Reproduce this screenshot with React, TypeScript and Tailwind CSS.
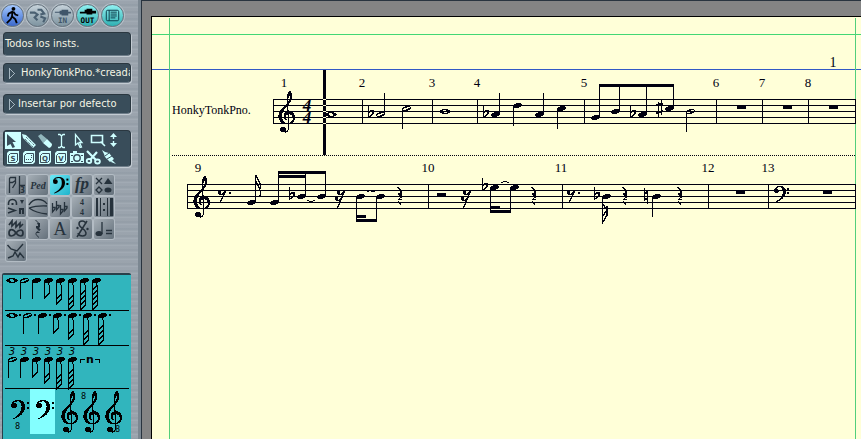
import React from 'react';
import clsx from 'clsx';

const INK = '#000010';

/* ---------- music glyphs ---------- */

type Head = 'whole' | 'half' | 'full';

const HEADS: Record<Head, string> = {
  whole: 'M-3 -2H3V-1H5V0H6V1H5V2H3V3H-3V2H-5V1H-6V0H-5V-1H-3ZM-2 -1V1H-1V2H2V0H1V-1Z',
  half: 'M-1 -2H4V-1H5V1H4V2H2V3H-3V2H-4V0H-3V-1H-1ZM-2 0V1H-3V2H0V1H2V0H4V-1H1V0Z',
  full: 'M-1 -2H4V-1H5V1H4V2H2V3H-3V2H-4V0H-3V-1H-1Z',
};

const NoteHead: React.FC<{ x: number; y: number; kind?: Head }> = ({ x, y, kind = 'full' }) => (
  <path d={HEADS[kind]} fillRule="evenodd" transform={`translate(${x} ${y})`} />
);

const TrebleClef: React.FC<{ x: number; y: number }> = ({ x, y }) => (
  <g transform={`translate(${x} ${y})`}>
    <path d="M9.200 14C7.900 8 8.800 2.400 12.200 0C14.900 3.500 14.600 9 12.400 12.400C9.600 16.400 4.400 19.400 3.800 25.400C3.400 29.800 6 33 9.400 33C12.800 33 14.800 31 14.800 28.200C14.800 25.800 13 24.200 10.900 24.200C8.800 24.200 7.600 25.800 7.800 27.600C7.900 29 8.600 29.800 9.600 30.400C7 30.200 5.400 28.200 5.600 25.800C5.800 22.800 8.200 21 11 21C14.600 21 17 23.800 17 27.400C17 31.600 13.800 34.400 9.200 34.400C3.800 34.400 0.200 31 0.200 26C0.200 20.400 5.200 17.200 8.800 13.400C11 11 12.800 8 12.600 4.600C10.600 5.600 9.800 9 10.600 13Z" />
    <path d="M9.600 10L10.600 37C10.700 40.500 9 42.300 6.600 42.200" fill="none" stroke="currentColor" strokeWidth="1.100" />
    <circle cx="5.200" cy="39.600" r="2.900" />
  </g>
);

const BassClef: React.FC<{ x: number; y: number; big?: boolean }> = ({ x, y, big }) => (
  <g transform={`translate(${x} ${y}) scale(${big ? 1.18 : 1})`}>
    <path d="M1 4.800C1.200 1.400 4 0 7 0C11 0 13 2.400 13 6C13 11 8 14.400 2.400 16.600L2 16C6.600 13.600 9.800 10.600 9.800 6C9.800 3 9 1.100 6.600 1.100C4.800 1.100 3 1.800 2.400 3.200Z" />
    <circle cx="3.400" cy="4.700" r="2.400" />
    <rect x="14.400" y="1.600" width="2" height="2" />
    <rect x="14.400" y="6" width="2" height="2" />
  </g>
);

const Flat: React.FC<{ x: number; y: number }> = ({ x, y }) => (
  <path d={`M${x - 1.5} ${y - 9}V${y + 3.5}L${x + 3} ${y - 0.5}V${y - 3}H${x + 0.5}L${x - 1.5} ${y - 1}`} fill="none" stroke="currentColor" strokeWidth="1.200" />
);

const Sharp: React.FC<{ x: number; y: number }> = ({ x, y }) => (
  <g stroke="currentColor">
    <path d={`M${x - 1.5} ${y - 6}V${y + 9}M${x + 1.5} ${y - 8}V${y + 7}`} strokeWidth="1" />
    <path d={`M${x - 3.5} ${y - 2.5}L${x + 3.5} ${y - 4.5}M${x - 3.5} ${y + 5}L${x + 3.5} ${y + 3}`} strokeWidth="2" />
  </g>
);

const Natural: React.FC<{ x: number; y: number }> = ({ x, y }) => (
  <g stroke="currentColor">
    <path d={`M${x - 1.5} ${y - 8}V${y + 5}M${x + 1.5} ${y - 5}V${y + 8}`} strokeWidth="1" />
    <path d={`M${x - 2} ${y - 2.5}L${x + 2} ${y - 4}M${x - 2} ${y + 4}L${x + 2} ${y + 2.5}`} strokeWidth="2" />
  </g>
);

const QuarterRest: React.FC<{ x: number; y: number }> = ({ x, y }) => (
  <g transform={`translate(${x} ${y})`}>
    <path d="M-1 -6H2V-2L1 -1L3 1H0L-2 -1V-3H0V-4Z" />
    <path d="M-2.500 -9L0.500 -6M2 1C0.500 2 -1.800 2.500 -2 4.500C-2 6.500 -0.500 7 1 8.500M-1.500 3.500H1.500" fill="none" stroke="currentColor" />
  </g>
);

const ShortRest: React.FC<{ x: number; y: number; hooks: number }> = ({ x, y, hooks }) => (
  <g>
    {Array.from({ length: hooks }, (_, i) => (
      <g key={i}>
        <circle cx={x - 2.5 - i * 2} cy={y - 4 + i * 6} r="1.900" />
        <path d={`M${x - 3 - i * 2} ${y - 2 + i * 6}H${x + 0.5 - i * 2}L${x + 4 - i * 2} ${y - 5.5 + i * 6}`} fill="none" stroke="currentColor" />
      </g>
    ))}
    <path d={`M${x + 4} ${y - 6}L${x - hooks * 2 + 0.5} ${y + (hooks === 2 ? 12 : 6)}`} stroke="currentColor" strokeWidth="1.300" />
  </g>
);

interface NoteProps {
  x: number;
  y: number;
  kind?: Head;
  stem?: number;
  up?: boolean;
  flat?: boolean;
}

const Note: React.FC<NoteProps> = ({ x, y, kind, stem, up, flat }) => {
  const sx = up ? x + 4 : x - 4;
  return (
    <g>
      {flat && <Flat x={x - 10} y={y} />}
      <NoteHead x={x} y={y} kind={kind} />
      {stem !== undefined && <rect x={sx} y={Math.min(y, stem)} width="1" height={Math.abs(stem - y)} />}
    </g>
  );
};

/* ---------- score ---------- */

interface StaffProps {
  x: number;
  y: number;
  bars: number[];
  numbers: [number, number][];
  children: React.ReactNode;
}

const Staff: React.FC<StaffProps> = ({ x, y, bars, numbers, children }) => (
  <g>
    {[0, 6, 12, 18, 24].map((dy) => (
      <rect key={dy} x={x} y={y + dy} width={856 - x} height="1" />
    ))}
    {[x, ...bars, 855].map((bx) => (
      <rect key={bx} x={bx} y={y} width="1" height="25" />
    ))}
    {numbers.map(([n, nx]) => (
      <text key={n} x={nx} y={y - 12} textAnchor="middle" className="text-[13px]">{n}</text>
    ))}
    {children}
  </g>
);

const FIRST_NOTES: NoteProps[] = [
  { x: 331, y: 114, kind: 'whole' },
  { x: 380, y: 114, kind: 'half', stem: 93, up: true, flat: true },
  { x: 406, y: 108, kind: 'half', stem: 129 },
  { x: 445, y: 111, kind: 'whole' },
  { x: 495, y: 114, stem: 93, up: true, flat: true },
  { x: 517, y: 105, stem: 126 },
  { x: 539, y: 114, stem: 93, up: true },
  { x: 561, y: 108, stem: 129 },
  { x: 595, y: 117, stem: 84, up: true },
  { x: 615, y: 111, stem: 84, up: true },
  { x: 642, y: 114, stem: 84, up: true, flat: true },
  { x: 669, y: 108, stem: 84, up: true },
  { x: 690, y: 111, kind: 'half', stem: 132 },
];

const SECOND_NOTES: NoteProps[] = [
  { x: 251, y: 202, stem: 175, up: true },
  { x: 274, y: 202, stem: 171, up: true },
  { x: 301, y: 196, stem: 171, up: true, flat: true },
  { x: 321, y: 196, stem: 171, up: true },
  { x: 360, y: 196, stem: 221 },
  { x: 380, y: 196, stem: 221 },
  { x: 494, y: 187, stem: 212, flat: true },
  { x: 514, y: 187, stem: 212 },
  { x: 606, y: 196, stem: 224, flat: true },
  { x: 656, y: 196, stem: 217 },
];

// [x, y, width, height]
const BEAMS = [
  [599, 84, 75, 3],
  [278, 171, 48, 3],
  [278, 175, 28, 3],
  [356, 219, 21, 3],
  [356, 215, 10, 3],
  [490, 210, 21, 3],
  [490, 206, 10, 3],
];

const BLOCK_RESTS = [[737, 106], [783, 106], [829, 106], [437, 193], [736, 191], [823, 191]];

const Score: React.FC = () => (
  <svg className="block w-full h-full text-[#000010] font-['Liberation_Serif',serif]" fill="currentColor" role="img" aria-label="HonkyTonkPno.">
    {/* the score keeps window coordinates, the sheet starts at 152,17 */}
    <g transform="translate(-152 -17)">
      <g shapeRendering="crispEdges">
        <rect x="152" y="34" width="100%" height="1" fill="#42d774" />
        <rect x="152" y="69" width="100%" height="1" fill="#3159c6" />
        <rect x="169" y="18" width="1" height="100%" fill="#52cf7b" />
        <rect x="855" y="18" width="1" height="100%" fill="#52cf7b" />
        <path d="M172 155.500H855" stroke={INK} strokeDasharray="1 1" />
      </g>
      <text x="833" y="67" textAnchor="middle" className="text-[14px]">1</text>
      <text x="172" y="114" className="text-[12px]">HonkyTonkPno.</text>

      <g shapeRendering="crispEdges">
        <Staff x={273} y={99} bars={[362, 432, 477, 584, 716, 762, 808]}
          numbers={[[1, 284], [2, 362], [3, 432], [4, 477], [5, 584], [6, 716], [7, 762], [8, 808]]}>
          <TrebleClef x={278} y={90} />
          {[111, 123].map((ty) => (
            <text key={ty} x="307" y={ty} textAnchor="middle" className="text-[17px] italic font-bold">4</text>
          ))}
          <rect x="323" y="70" width="3" height="85" />
          {FIRST_NOTES.map((n) => <Note key={n.x} {...n} />)}
          <Sharp x={659.5} y={108} />
        </Staff>

        <Staff x={187} y={184} bars={[428, 562, 708, 768]}
          numbers={[[9, 198], [10, 428], [11, 561], [12, 708], [13, 768]]}>
          <TrebleClef x={193} y={175} />
          {SECOND_NOTES.map((n) => <Note key={n.x} {...n} />)}
          <path d="M256 175C257 181 262 182 260 189M256 181C257 187 262 188 260 196" fill="none" stroke={INK} strokeWidth="1.400" />
          <path d="M603 222L607 215V210L603 204M603 216L607 210V206" fill="none" stroke={INK} strokeWidth="1.400" />
          <ShortRest x={222} y={196} hooks={1} />
          <rect x="229" y="192" width="2" height="2" />
          <ShortRest x={341} y={196} hooks={2} />
          <ShortRest x={467} y={196} hooks={2} />
          <ShortRest x={571} y={196} hooks={1} />
          <rect x="578" y="192" width="2" height="2" />
          {[400, 534, 625, 680].map((rx) => <QuarterRest key={rx} x={rx} y={196} />)}
          <Natural x={646} y={196} />
          <path d="M307 200.500H309M309 201.500H313M313 200.500H315M367 191.500H369M371 191.500H375M501 182.500H503M503 181.500H507M507 182.500H509" fill="none" stroke={INK} />
          <BassClef x={773} y={186} />
        </Staff>

        {BEAMS.map(([x, y, w, h]) => <rect key={`${x}-${y}`} x={x} y={y} width={w} height={h} />)}
        {BLOCK_RESTS.map(([x, y]) => <rect key={`${x}-${y}`} x={x} y={y} width="9" height="3" />)}
        {[99, 105, 111, 117, 123].map((cy) => <rect key={cy} x="323" y={cy} width="3" height="1" fill="#ffffd8" />)}
      </g>
    </g>
  </svg>
);

/* ---------- sidebar ---------- */

const line = { fill: 'none', stroke: 'currentColor', strokeWidth: 1.3 };

const TRANSPORT = [
  {
    label: 'Paso',
    tone: 'from-[#a4c8ff] to-[#3b68cc]',
    icon: (
      <g>
        <circle cx="12" cy="4" r="2" />
        <path d="M11 6L10.500 12L14 15L15.500 19M10.500 12L9 15L5 19M11 7L7 9L6 12M12 7L14 10L17 11" fill="none" stroke="currentColor" strokeWidth="1.900" />
      </g>
    ),
  },
  {
    label: 'MIDI',
    tone: 'from-[#c6d2da] to-[#7e94a0]',
    icon: <path d="M3 8H8L11 10L8 13L11 16M11 5L15 5L18 9L14 10M14 12L19 14L17 18" fill="none" stroke="#4a6072" strokeWidth="2.200" />,
  },
  {
    label: 'IN',
    tone: 'from-[#c6d2da] to-[#7e94a0]',
    icon: (
      <g fill="#40566a">
        <path d="M3 7H8V6H10V5H17V7H20V9H17V11H10V10H8V8H3Z" />
        <text x="11" y="19" textAnchor="middle" className="text-[8px] font-bold font-['DejaVu_Sans_Mono',monospace]">IN</text>
      </g>
    ),
  },
  {
    label: 'OUT',
    tone: 'from-[#8ff2f2] to-[#2bb0b2]',
    icon: (
      <g>
        <path d="M3 7H8V5H10V4H16V6H20V9H16V10H10V9H3Z" />
        <text x="11" y="19" textAnchor="middle" className="text-[8px] font-bold font-['DejaVu_Sans_Mono',monospace]">OUT</text>
      </g>
    ),
  },
  {
    label: 'Lista',
    tone: 'from-[#8ff2f2] to-[#2bb0b2]',
    icon: <path d="M4.500 7Q4.500 5.500 6 5.500H16Q17.500 5.500 17.500 7V15Q17.500 16.500 16 16.500H6Q4.500 16.500 4.500 15ZM7.500 5.500V16.500M9 7.500H15.500M9 9.500H15.500M9 11.500H15.500M9 13.500H14" fill="none" stroke="#0b3a48" />,
  },
];

const badge = (content: React.ReactNode) => (
  <g>
    <path d="M4 1H14V12L12 14H2V3Z" />
    <path d="M5.500 3.500H12.500V10.500L10.500 12.500H3.500V5.500Z" fill="none" stroke="#394d5a" />
    <g fill="#394d5a" className="text-[7px] font-bold font-['DejaVu_Sans',sans-serif]">{content}</g>
  </g>
);

const TOOLS = [
  { label: 'Flecha', icon: <path d="M2 1L11 9H7.500L10 14L7.500 15L5.500 11L2 13Z" fill="#394d5a" /> },
  { label: 'Lápiz', icon: <g><path d="M1 1L5 2L15 12L12 15L2 5Z" /><path d="M5 4L13 12M4 6L12 14" stroke="#394d5a" strokeDasharray="1 1" /></g> },
  { label: 'Goma', icon: <g><path d="M1 3L4 1L10 6L6 10Z" opacity=".6" /><path d="M6 10L10 6L15 11Q15 14 12 15Z" /></g> },
  { label: 'Texto', icon: <path d="M5 1.500H7L8.500 3L10 1.500H12M8.500 3V13M5 14.500H7L8.500 13L10 14.500H12" {...line} /> },
  { label: 'Selector', icon: <path d="M6.500 1.500V12L9 10L11 14.500L12.500 14L10.500 9.500H13Z" {...line} /> },
  { label: 'Marco', icon: <path d="M6.500 2.500H17.500V9.500H6.500ZM15.500 8.500L20 13" {...line} strokeWidth="1.600" /> },
  { label: 'Altura', icon: <path d="M12.500 0L16 4H13.200V6H11.800V4H9ZM12.500 14L9 10H11.800V8H13.200V10H16Z" /> },
  { label: 'Solo', icon: badge(<text x="8" y="11" textAnchor="middle">S</text>) },
  { label: 'Separar', icon: badge(<path d="M5 9H6V10H5ZM7 9H8V10H7ZM9 9H10V10H9ZM10 7H11V8H10ZM10 5H11V6H10Z" />) },
  { label: 'Cuantizar', icon: badge(<text x="8" y="11" textAnchor="middle">Q</text>) },
  { label: 'Velocidad', icon: badge(<text x="8" y="11" textAnchor="middle">V</text>) },
  { label: 'Cámara', icon: <g><path d="M1 3H4V1H8V3H15V13H1Z" /><circle cx="8" cy="8" r="3.200" fill="none" stroke="#394d5a" strokeWidth="1.400" /><path d="M2 5.500H4M12 5.500H14M2 11.500H4M12 11.500H14" stroke="#394d5a" /></g> },
  { label: 'Tijeras', icon: <g><path d="M2 1L11 10M12 2L5 10" {...line} strokeWidth="2.200" /><ellipse cx="4" cy="11" rx="2.300" ry="2" {...line} strokeWidth="1.800" /><ellipse cx="12.500" cy="11.500" rx="2.400" ry="2" {...line} strokeWidth="1.800" /></g> },
  { label: 'Pegamento', icon: <g><path d="M1 0L4 2L8 3L13 9L9 12L4 7L3 4ZM11 10L15 14L10 12Z" /><path d="M4 6L8 3M6 9L11 6" stroke="#394d5a" /></g> },
];

const serif = "italic font-['Liberation_Serif',serif]";

const PALETTES = [
  { label: 'Notas', icon: <g><path d="M4.500 2.500H9.500V5.500L6.500 7.500H3.500V3.500ZM3.500 5V18M9.500 3V8L6.500 13M13.500 1V19M14 10.500H19" {...line} /><text x="14" y="18" className="text-[8px] font-bold">3</text></g> },
  { label: 'Pedal', icon: <text x="10" y="14" textAnchor="middle" className={`text-[10px] font-bold ${serif}`}>Ped</text> },
  { label: 'Claves', active: true, icon: <BassClef x={2} y={2} /> },
  { label: 'Dinámica', icon: <text x="10" y="14" textAnchor="middle" className={`text-[17px] font-bold ${serif}`}>fp</text> },
  { label: 'Cabezas', icon: <g><path d="M2 3L8 9M8 3L2 9M5 12L8 15L5 18L2 15Z" {...line} /><path d="M10 9L14 3L18.500 9Z" /><ellipse cx="14" cy="15" rx="3.500" ry="2.500" /></g> },
  { label: 'Acentos', icon: <g><path d="M2.500 8Q2 2.500 6.500 2.500Q11 2.500 10.500 8M2 11L9 13.500L2 16" {...line} strokeWidth="1.600" /><rect x="5.500" y="6" width="2" height="2" /><path d="M14 3H18L16 7ZM13 11H18V17H16V13H15V17H13Z" /></g> },
  { label: 'Ligaduras', icon: <path d="M1 8Q4 2.500 10 2.500T19 7M1 11Q8 8.500 19 9M1 11Q8 16 19 17" {...line} /> },
  { label: 'Armadura', icon: <path d="M2.500 6V15L5 12V10.500H3M6.500 4V13L9 10V8.500H7M10.500 8V17L13 14V12.500H11M14.500 5V14L17 11V9.500H15" {...line} /> },
  { label: 'Compás', icon: <g className="text-[8px] font-bold font-['Liberation_Serif',serif]"><text x="8" y="8">4</text><text x="8" y="18">4</text></g> },
  { label: 'Barras', icon: <path d="M2 1H4V19H2ZM6 1H7V19H6ZM9 6H11V8H9ZM9 12H11V14H9ZM13 1H14V19H13ZM16 1H19V19H16Z" /> },
  { label: 'Adornos', icon: <path d="M3 6L6 2V7L10 3V8L14 4V8L17 5M10 14C7 9 3 10 3 14S7 18 10 14S17 10 17 14S13 18 10 14" {...line} strokeWidth="1.700" /> },
  { label: 'Silencios', icon: <QuarterRest x={10} y={10} /> },
  { label: 'Texto', icon: <text x="10" y="16" textAnchor="middle" className="text-[18px] font-['Liberation_Serif',serif]">A</text> },
  { label: 'Segno', icon: <g><path d="M14 5C13 1 7 1 7 5S14 10 14 14S7 18 6 14M5 18L15 2" {...line} strokeWidth="1.500" /><circle cx="5.500" cy="9" r="1.200" /><circle cx="15.500" cy="10" r="1.200" /></g> },
  { label: 'Tempo', icon: <g><ellipse cx="5" cy="14.500" rx="3.500" ry="2.600" /><path d="M8 3V15M12 11.500H18M12 14.500H18" {...line} /></g> },
  { label: 'Arcos', icon: <path d="M1.500 4L5 8L11 10L17 3M2 17L7 15L9 11L12 16L14 12L18 17" {...line} strokeWidth="1.400" /> },
];

// stem length and flag count for each note value, whole note first
const VALUES = [
  { label: 'Redonda', stem: 0, flags: 0 },
  { label: 'Blanca', stem: 18, flags: 0 },
  { label: 'Negra', stem: 18, flags: 0 },
  { label: 'Corchea', stem: 18, flags: 1 },
  { label: 'Semicorchea', stem: 24, flags: 2 },
  { label: 'Fusa', stem: 30, flags: 3 },
  { label: 'Semifusa', stem: 30, flags: 4 },
  { label: 'Garrapatea', stem: 30, flags: 5 },
];

interface ValueRowProps {
  values: typeof VALUES;
  dotted?: boolean;
  triplet?: boolean;
}

const ValueRow: React.FC<ValueRowProps> = ({ values, dotted, triplet }) => (
  <>
    {values.map((v) => (
      <button
        key={v.label}
        aria-label={`${v.label}${dotted ? ' con puntillo' : ''}${triplet ? ' de tresillo' : ''}`}
        className={clsx('flex flex-col items-start', dotted ? 'w-[15px]' : 'w-3')}
      >
        {triplet && <span className="h-2 w-3 text-center text-[10px] leading-[10px] italic font-['DejaVu_Sans',sans-serif]">3</span>}
        <svg className="block w-3 h-[34px] overflow-visible" fill="currentColor" shapeRendering="crispEdges">
          <NoteHead x={6} y={4} kind={v.stem === 0 ? 'whole' : v.label === 'Blanca' ? 'half' : 'full'} />
          {v.stem > 0 && <rect x="2" y="5" width="1" height={v.stem} />}
          {Array.from({ length: v.flags }, (_, i) => (
            <path key={i} d={`M3 ${4 + v.stem - i * 5}L7 ${v.stem - 1 - i * 5}`} stroke="currentColor" strokeWidth="1.600" />
          ))}
          {v.flags > 0 && <path d={`M6 7L7.500 10V${v.stem - 1}`} fill="none" stroke="currentColor" />}
          {dotted && <rect x="13" y="3" width="2" height="2" />}
        </svg>
      </button>
    ))}
  </>
);

const fieldBox = 'flex items-center w-full rounded-[4px] bg-[#394d5a] border border-[#2a3740] border-b-[#6f7e8a] shadow-[1px_1px_0_#c3cbd2] text-[11px] leading-[14px] text-[#f4f4e4] overflow-hidden whitespace-nowrap';

const Triangle = () => (
  <svg className="w-[7px] h-[11px] shrink-0" shapeRendering="crispEdges">
    <path d="M0.500 0.500V10.500L5.500 5.500Z" fill="none" stroke="#a5b6c0" />
  </svg>
);

const clefButton = 'h-[45px] text-black';

const Sidebar: React.FC = () => (
  <aside className="w-[142px] shrink-0 flex flex-col pl-[3px] pr-[10px] border-r border-[#29343f] bg-[#9aa3ac] bg-[repeating-linear-gradient(180deg,#a4adb6_0px,#98a1ab_2px,#9da6af_3px,#929ca6_5px,#9ea7b0_7px)] shadow-[inset_-3px_0_0_#7b8791]">
    <div className="flex gap-[2px] pt-[4px] -ml-[2px]">
      {TRANSPORT.map((t) => (
        <button key={t.label} aria-label={t.label} className={`w-[23px] h-[23px] shrink-0 rounded-full bg-linear-to-b border border-[#66737e] shadow-[0_0_0_1px_#b8c2ca] text-black ${t.tone}`}>
          <svg className="block w-[21px] h-[21px]" viewBox="0 0 22 22" fill="currentColor">{t.icon}</svg>
        </button>
      ))}
    </div>

    <div className={`${fieldBox} mt-[5px] h-6 pl-px`}>Todos los insts.</div>
    <button className={`${fieldBox} mt-[7px] h-5 pl-[5px] gap-[5px]`}><Triangle />HonkyTonkPno.*creada</button>
    <button className={`${fieldBox} mt-[11px] h-5 pl-[5px] gap-[2px]`}><Triangle />Insertar por defecto</button>

    <div className="mt-4 h-[37px] rounded-[4px] bg-[#394d5a] border border-[#2a3740] border-b-[#6f7e8a] shadow-[1px_1px_0_#c3cbd2] p-px grid grid-cols-[repeat(7,16px)] content-start">
      {TOOLS.map((t, i) => (
        <button key={t.label} aria-label={t.label} className={clsx('h-[17px]', i === 0 && 'bg-[#ceffff]')}>
          <svg className="block w-4 h-4 overflow-visible text-[#ceffff]" fill="currentColor">{t.icon}</svg>
        </button>
      ))}
    </div>

    <div className="mt-2 pl-[3px] grid grid-cols-[repeat(5,20px)] gap-[2px]">
      {PALETTES.map((p) => (
        <button
          key={p.label}
          aria-label={p.label}
          className={clsx(
            'h-5 rounded-[2px] shadow-[0_0_0_1px_#b3bcc4] bg-linear-to-br',
            p.active ? 'from-[#6beaf7] to-[#18b4cc] text-black' : 'from-[#a6afb6] to-[#65717c] text-[#26323c]'
          )}
        >
          <svg className="block w-5 h-5" fill="currentColor">{p.icon}</svg>
        </button>
      ))}
    </div>

    <div className="mt-3 -ml-px flex-1 min-h-[166px] rounded-t-[2px] border-t-2 border-l border-[#29404a] bg-[#31b5bd] text-black px-[2px]">
      <div className="h-9 border-b border-black flex pt-px pl-px"><ValueRow values={VALUES} /></div>
      <div className="h-[35px] border-b border-black flex pl-px"><ValueRow values={VALUES.slice(0, 7)} dotted /></div>
      <div className="h-[43px] border-b border-black flex pt-px pl-px">
        <ValueRow values={VALUES.slice(1, 7)} triplet />
        <button aria-label="Grupo irregular" className="ml-px h-6">
          <svg className="block w-[22px] h-5" fill="currentColor" shapeRendering="crispEdges">
            <path d="M1.500 14V10.500H6M16 10.500H20.500V14" fill="none" stroke="currentColor" />
            <text x="11" y="14" textAnchor="middle" className="text-[11px] font-bold font-['DejaVu_Sans',sans-serif]">n</text>
          </svg>
        </button>
      </div>
      <div className="flex">
        <button aria-label="Clave de fa octava baja" className={`w-[25px] ${clefButton}`}>
          <svg className="block w-full h-[45px]" fill="currentColor" shapeRendering="crispEdges">
            <BassClef x={5} y={11} big />
            <text x="10" y="40" className="text-[9px]">8</text>
          </svg>
        </button>
        <button aria-label="Clave de fa" className={`w-[25px] bg-[#84ffff] ${clefButton}`}>
          <svg className="block w-full h-[45px]" fill="currentColor" shapeRendering="crispEdges"><BassClef x={5} y={11} big /></svg>
        </button>
        {['Clave de sol', 'Clave de sol octava alta', 'Clave de sol octava baja'].map((label, i) => (
          <button key={label} aria-label={label} className={`w-[22px] ${clefButton}`}>
            <svg className="block w-full h-[45px] overflow-visible" fill="currentColor" shapeRendering="crispEdges">
              <TrebleClef x={6} y={1} />
              {i === 1 && <text x="4" y="10" className="text-[9px]">8</text>}
              {i === 2 && <text x="16" y="43" className="text-[9px]">8</text>}
            </svg>
          </button>
        ))}
      </div>
    </div>
  </aside>
);

const App: React.FC = () => (
  <div className="flex h-screen min-h-[439px] w-full overflow-hidden font-['DejaVu_Sans_Condensed','Liberation_Sans',sans-serif]">
    <Sidebar />
    <main className="flex-1 min-w-0 flex bg-[#848484] border-t border-[#29343f] pt-[15px] pl-[9px]">
      <div className="flex-1 min-w-0 bg-[#ffffd8] border-t border-l border-black">
        <Score />
      </div>
    </main>
  </div>
);

export default App;
